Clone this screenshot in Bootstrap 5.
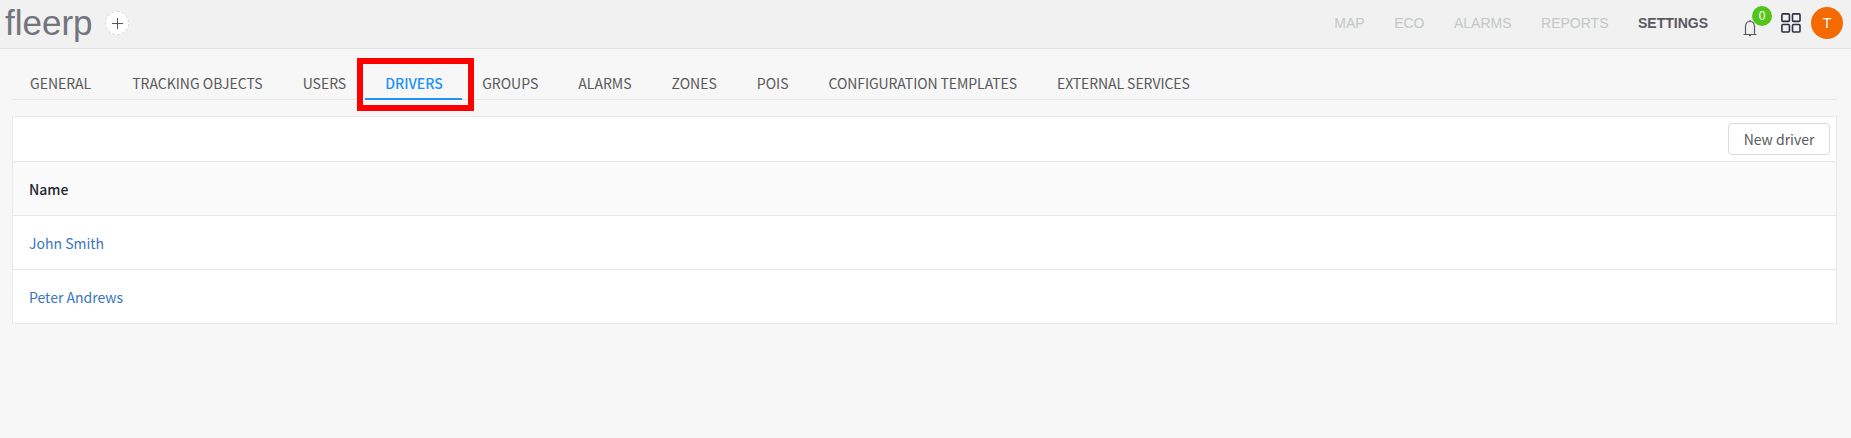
<!DOCTYPE html>
<html lang="en">
<head>
<meta charset="utf-8">
<title>fleerp - Drivers</title>
<link rel="stylesheet" href="https://cdn.jsdelivr.net/npm/bootstrap@5.3.0/dist/css/bootstrap.min.css">
<style>
body{background:#f7f7f7;font-family:"Noto Sans CJK SC",sans-serif;font-size:14px;line-height:22px;color:#595959;min-height:438px;overflow:hidden}
.topbar{height:49px;background:#f1f1f1;border-bottom:1px solid #e2e2e2;font-family:"Liberation Sans",sans-serif;padding:0 8px 2px 5px}
.brand{font-size:35px;line-height:46px;color:#74747f;width:100px}
.add{width:24px;height:24px;border:1px dashed #d9d9d9;background:#fff}
.mainnav{font-size:14px;gap:29.5px}
.mainnav a{color:#c3c7c7;text-decoration:none}
.mainnav a.active{color:#595960;font-weight:700}
.bell{width:20px;height:46px;margin-left:33px;margin-right:20px}
.count{left:11px;top:6px;width:20px;height:20px;background:#54c41b;color:#fff;font-size:12px;line-height:20px}
.avatar{width:32px;height:32px;background:#f56a00;color:#fff;font-size:14px;margin-left:10px}
.tabs{margin:11px 14px 0 12px;height:40px;border-bottom:1px solid #e8e8e8}
.tabs a{display:block;height:40px;padding:12px 20px 0;color:#595959;text-decoration:none;white-space:nowrap}
.tabs a:first-child{padding-left:18px;padding-right:21px}
.tabs a.active{color:#2091f6;font-weight:500;width:97px;margin-left:-1px;border-bottom:2px solid #2091f6;position:relative}
.tabs a.active::after{content:"";position:absolute;left:-8px;top:-2px;width:117px;height:53px;border:6px solid #f00}
.tabs .long{letter-spacing:-.08px}
.panel{margin:16px 14px 0 12px;border:1px solid #e8e8e8;background:#fff}
.tools{height:44px;padding-right:6px}
.newbtn{width:102px;height:32px;border:1px solid #d9d9d9;border-radius:4px;background:#fff;color:#595959;font-size:14px;line-height:22px;padding:4px 0}
.list div{height:54px;border-top:1px solid #e8e8e8;padding:16px 16px 0;color:#3a76bd}
.list .head{background:#fafafa;color:#262630;font-weight:500;border-radius:3px 3px 0 0}
</style>
</head>
<body>
<header class="topbar d-flex align-items-center">
  <div class="brand">fleerp</div>
  <button class="add rounded-circle p-0 d-flex align-items-center justify-content-center" aria-label="Add"><svg width="12" height="12" viewBox="0 0 12 12" stroke="#595959" stroke-width="1"><path d="M6.500 1v11M1 6.500h11"/></svg></button>
  <nav class="mainnav d-flex ms-auto"><a href="#">MAP</a><a href="#">ECO</a><a href="#">ALARMS</a><a href="#">REPORTS</a><a class="active" href="#">SETTINGS</a></nav>
  <div class="bell position-relative">
    <svg class="d-block" width="20" height="40" viewBox="0 0 20 40" fill="none" stroke="#595960" stroke-width="1.2"><path d="M2.500 34.500h13M4.500 34v-7.500C4.500 23 6 21.500 9 21.500S13.500 23 13.500 26.500V34M9 20v1.500M8 35.700h2"/></svg>
    <span class="count position-absolute rounded-circle text-center">0</span>
  </div>
  <svg width="20" height="20" viewBox="0 0 20 20" fill="none" stroke="#2e2e45" stroke-width="1.6"><rect x=".9" y=".9" width="7.500" height="7.500" rx="1"/><rect x="11.500" y=".9" width="7.500" height="7.500" rx="1"/><rect x=".9" y="11.500" width="7.500" height="7.500" rx="1"/><rect x="11.500" y="11.500" width="7.500" height="7.500" rx="1"/></svg>
  <div class="avatar rounded-circle d-flex align-items-center justify-content-center">T</div>
</header>
<nav class="tabs d-flex">
  <a href="#">GENERAL</a><a href="#">TRACKING OBJECTS</a><a href="#">USERS</a><a class="active" href="#">DRIVERS</a><a href="#">GROUPS</a><a href="#">ALARMS</a><a href="#">ZONES</a><a href="#">POIS</a><a class="long" href="#">CONFIGURATION TEMPLATES</a><a class="long" href="#">EXTERNAL SERVICES</a>
</nav>
<main class="panel">
  <div class="tools d-flex align-items-center justify-content-end"><button class="newbtn">New driver</button></div>
  <div class="list">
    <div class="head">Name</div>
    <div>John Smith</div>
    <div>Peter Andrews</div>
  </div>
</main>
<script src="https://cdn.jsdelivr.net/npm/bootstrap@5.3.0/dist/js/bootstrap.bundle.min.js"></script>
</body>
</html>
